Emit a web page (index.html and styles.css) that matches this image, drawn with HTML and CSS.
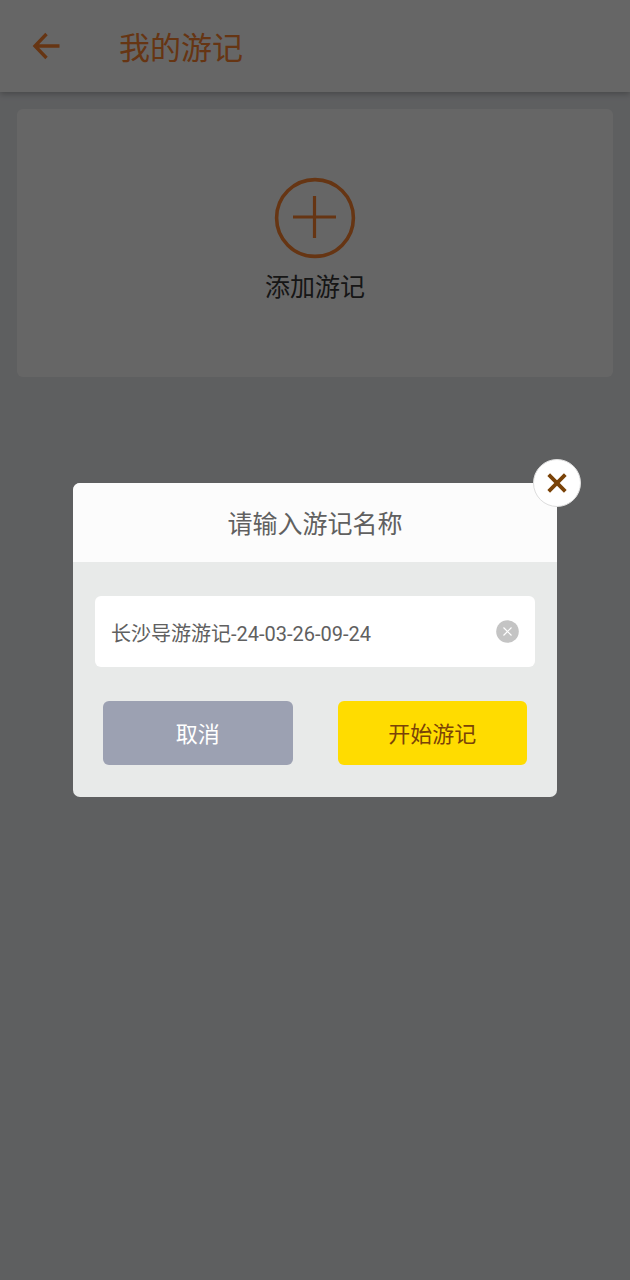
FILE: index.html
```
<!DOCTYPE html>
<html lang="zh-CN">
<head>
<meta charset="utf-8">
<meta name="viewport" content="width=device-width, initial-scale=1">
<title>我的游记</title>
<link rel="stylesheet" href="styles.css">
</head>
<body>
<div class="page">
  <header class="app-bar">
    <button class="back" type="button" aria-label="返回">
      <svg width="28" height="28" viewBox="0 0 28 28" fill="none" stroke="currentColor" stroke-width="3.400"><path d="M14.500 2 3 14l11.500 12M3 14h24.500"/></svg>
    </button>
    <h1 class="app-title">我的游记</h1>
  </header>
  <main class="content">
    <button class="add-card" type="button">
      <svg class="add-icon" width="82" height="82" viewBox="0 0 82 82" fill="none" stroke="currentColor" stroke-width="3.6"><circle cx="41" cy="41" r="38.4"/><path d="M19 40h43M40.500 19v42" stroke-width="3.200"/></svg>
      <span>添加游记</span>
    </button>
  </main>
</div>
<div class="overlay">
  <form class="dialog" role="dialog" aria-labelledby="dialog-title">
    <button class="close" type="button" aria-label="关闭">
      <svg width="20" height="20" viewBox="0 0 20 20" fill="none" stroke="currentColor" stroke-width="3.800"><path d="m1.700 1.700 16.600 16.600M18.300 1.700 1.700 18.300"/></svg>
    </button>
    <h2 class="dialog-title" id="dialog-title">请输入游记名称</h2>
    <div class="dialog-body">
      <div class="field">
        <input class="name" type="text" aria-label="游记名称" value="长沙导游游记-24-03-26-09-24">
        <button class="clear" type="button" aria-label="清除">
          <svg width="23" height="23" viewBox="0 0 23 23" fill="none"><circle cx="11.500" cy="11.500" r="11.300" fill="#c4c4c4"/><path d="m7.500 7.500 8 8m0-8-8 8" stroke="#fff" stroke-width="1.200"/></svg>
        </button>
      </div>
      <div class="actions">
        <button class="action cancel" type="button">取消</button>
        <button class="action start" type="submit">开始游记</button>
      </div>
    </div>
  </form>
</div>
</body>
</html>
```
FILE: styles.css
```
* {
  box-sizing: border-box;
}

body {
  margin: 0;
  font-family: Roboto, "Noto Sans CJK SC", sans-serif;
  background: #ebedf1;
}

button,
input {
  margin: 0;
  padding: 0;
  border: 0;
  font: inherit;
  background: none;
}

svg {
  display: block;
}

.page {
  min-height: 100vh;
}

.app-bar {
  display: flex;
  align-items: center;
  gap: 59px;
  height: 92px;
  padding: 0 32px;
  color: #ff8430;
  background: #fff;
  box-shadow: 0 2px 6px rgba(0, 0, 0, 0.25);
}

.back {
  color: inherit;
}

.app-title {
  margin: 0;
  padding-top: 5px;
  font-size: 31px;
  font-weight: 400;
  line-height: 40px;
}

.content {
  padding: 17px;
}

.add-card {
  display: flex;
  flex-direction: column;
  align-items: center;
  gap: 11px;
  width: 100%;
  padding: 68px 0 71px;
  border-radius: 6px;
  color: #383838;
  font-size: 25px;
  line-height: 36px;
  background: #fff;
}

.add-icon {
  color: #ff8430;
}

.overlay {
  position: fixed;
  inset: 0;
  display: flex;
  align-items: center;
  justify-content: center;
  padding: 0 73px;
  background: rgba(0, 0, 0, 0.6);
}

.dialog {
  position: relative;
  width: 100%;
  max-width: 560px;
  border-radius: 7px;
  background: #e8eae9;
}

.close {
  position: absolute;
  top: -24px;
  right: -24px;
  display: grid;
  place-items: center;
  width: 48px;
  height: 48px;
  border: 1px solid #ddd;
  border-radius: 50%;
  color: #7a4308;
  background: #fff;
}

.dialog-title {
  margin: 0;
  padding: 23px 0 19px;
  border-radius: 7px 7px 0 0;
  color: #606060;
  font-size: 25px;
  font-weight: 400;
  line-height: 37px;
  text-align: center;
  background: #fcfcfc;
}

.dialog-body {
  padding: 34px 22px 32px;
}

.field {
  display: flex;
  align-items: center;
  height: 71px;
  padding: 0 16px;
  border-radius: 6px;
  background: #fff;
}

.name {
  flex: 1;
  min-width: 0;
  height: 100%;
  padding-top: 2px;
  outline: 0;
  color: #606060;
  font-size: 20px;
}

.actions {
  display: flex;
  gap: 45px;
  padding: 34px 8px 0;
}

.action {
  flex: 1;
  height: 64px;
  padding-bottom: 2px;
  border-radius: 6px;
  font-size: 22px;
}

.cancel {
  color: #fff;
  background: #9ca1b2;
}

.start {
  color: #7a4308;
  background: #ffdc00;
}
```
